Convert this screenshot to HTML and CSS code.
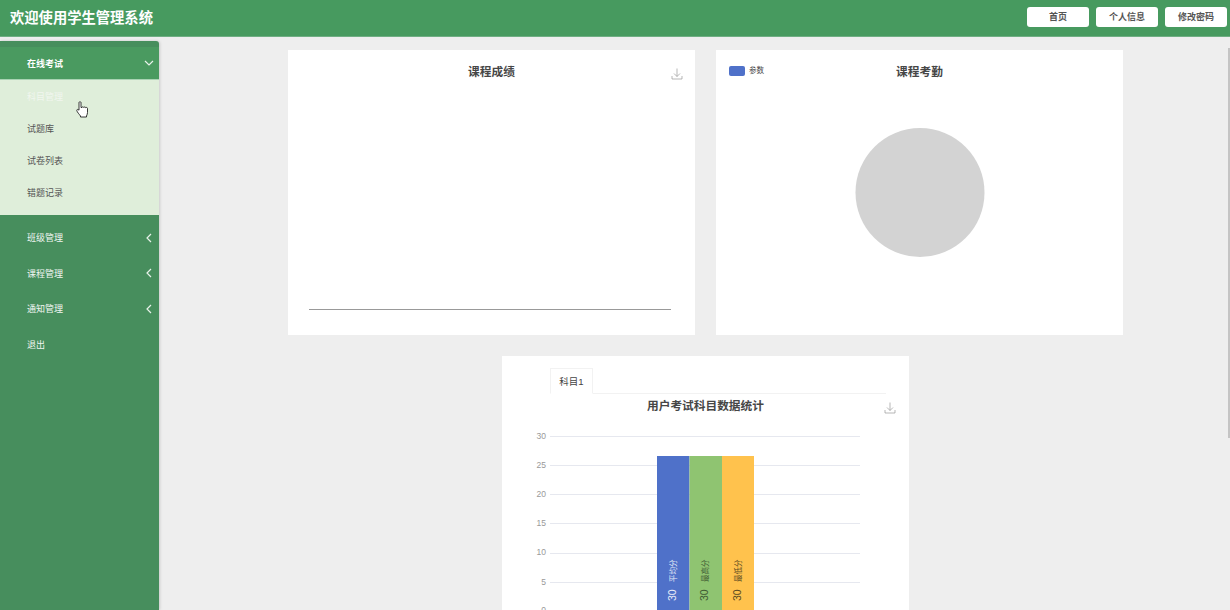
FILE: index.html
```html
<!DOCTYPE html>
<html>
<head>
  <title>学生管理系统</title>
  <link rel="stylesheet" href="styles.css">
</head>
<body>
  <div class="header">
    <div class="logo-title">欢迎使用学生管理系统</div>
    <div class="header-btns">
      <a class="header-btn">首页</a>
      <a class="header-btn">个人信息</a>
      <a class="header-btn">修改密码</a>
    </div>
  </div>

  <div class="page">
    <div class="sidebar">
      <div class="menu-item open">
        <span>在线考试</span>
        <svg class="arrow" width="10" height="10" viewBox="0 0 10 10"><path d="M1 3l4 4 4-4"/></svg>
      </div>
      <div class="submenu">
        <div class="sub-item active">科目管理</div>
        <div class="sub-item">试题库</div>
        <div class="sub-item">试卷列表</div>
        <div class="sub-item">错题记录</div>
      </div>
      <div class="menu-item">
        <span>班级管理</span>
        <svg class="arrow" width="10" height="10" viewBox="0 0 10 10"><path d="M7 1L3 5l4 4"/></svg>
      </div>
      <div class="menu-item">
        <span>课程管理</span>
        <svg class="arrow" width="10" height="10" viewBox="0 0 10 10"><path d="M7 1L3 5l4 4"/></svg>
      </div>
      <div class="menu-item">
        <span>通知管理</span>
        <svg class="arrow" width="10" height="10" viewBox="0 0 10 10"><path d="M7 1L3 5l4 4"/></svg>
      </div>
      <div class="menu-item">
        <span>退出</span>
      </div>
    </div>

    <div class="main">
      <div class="card">
        <div class="card-title">课程成绩</div>
        <svg class="save-icon" width="12" height="12" viewBox="0 0 12 12"><path d="M6 .5v8M3 5.500L6 8.500l3-3M1 8v3h10V8"/></svg>
        <svg class="chart" width="407" height="243" viewBox="0 0 407 243">
          <line x1="21" y1="217.500" x2="383" y2="217.500" stroke="#999999"/>
        </svg>
      </div>

      <div class="card">
        <div class="legend"><i class="legend-mark"></i><span class="legend-text">参数</span></div>
        <div class="card-title">课程考勤</div>
        <svg class="chart" width="407" height="243" viewBox="0 0 407 243">
          <circle cx="204" cy="100.500" r="64.500" fill="#d3d3d3"/>
        </svg>
      </div>

      <div class="card card-tall">
        <div class="tabs"><div class="tab">科目1</div></div>
        <div class="card-title title-small">用户考试科目数据统计</div>
        <svg class="save-icon save-low" width="12" height="12" viewBox="0 0 12 12"><path d="M6 .5v8M3 5.500L6 8.500l3-3M1 8v3h10V8"/></svg>
        <svg class="chart" width="407" height="200" viewBox="0 0 407 200">
          <g stroke="#e6e8ef">
            <line x1="48" y1="20.500" x2="358" y2="20.500"/>
            <line x1="48" y1="49.500" x2="358" y2="49.500"/>
            <line x1="48" y1="78.500" x2="358" y2="78.500"/>
            <line x1="48" y1="107.500" x2="358" y2="107.500"/>
            <line x1="48" y1="137.500" x2="358" y2="137.500"/>
            <line x1="48" y1="166.500" x2="358" y2="166.500"/>
            <line x1="48" y1="195.500" x2="358" y2="195.500"/>
          </g>
          <g class="axis-label" text-anchor="end">
            <text x="44" y="22.500">30</text>
            <text x="44" y="51.500">25</text>
            <text x="44" y="80.500">20</text>
            <text x="44" y="109.500">15</text>
            <text x="44" y="138.500">10</text>
            <text x="44" y="168.500">5</text>
            <text x="44" y="197">0</text>
          </g>
          <rect x="155" y="40" width="32.500" height="160" fill="#4f71c9"/>
          <rect x="187.500" y="40" width="32.500" height="160" fill="#8fc471"/>
          <rect x="220" y="40" width="32" height="160" fill="#ffc24d"/>
          <g class="bar-label" fill="#e8edf8" transform="translate(174 185) rotate(-90)"><text class="bar-num">30</text><text class="bar-name" x="19">平均分</text></g>
          <g class="bar-label" fill="#3f5a33" transform="translate(206 185) rotate(-90)"><text class="bar-num">30</text><text class="bar-name" x="19">最高分</text></g>
          <g class="bar-label" fill="#5a4a22" transform="translate(239 185) rotate(-90)"><text class="bar-num">30</text><text class="bar-name" x="19">最低分</text></g>
        </svg>
      </div>
    </div>
  </div>

  <div class="scroll-thumb"></div>

  <svg class="cursor" width="13" height="17" viewBox="0 0 13 17">
    <path d="M3 1.500c0-1 2-1 2 0v5l1 0c0-1 1.500-1 1.800 0 .2-.8 1.700-.8 1.900.2.400-.5 1.800-.3 1.800.8v4c0 1.500-.5 2-1 3.500v1H4.500v-1C3.500 13.500 1 11 .8 9.500c-.2-1 1-1.500 2.200-.3z" fill="#fff" stroke="#222" stroke-width=".9"/>
  </svg>
</body>
</html>
```

FILE: styles.css
```css
html, body {
  height: 100%;
}

body {
  margin: 0;
  background-color: #eeeeee;
  font-family: "Liberation Sans", "Noto Sans CJK SC", sans-serif;
  overflow: hidden;
  position: relative;
}

.header {
  height: 36px;
  background-color: #479a5f;
  border-bottom: 1px solid #6fae83;
  display: flex;
  justify-content: space-between;
  align-items: center;
  padding: 0 3px 0 10px;
}

.logo-title {
  color: #ffffff;
  font-size: 14.3px;
  font-weight: bold;
  margin-top: -3px;
}

.header-btns {
  display: flex;
  gap: 7px;
  margin-top: -2px;
}

.header-btn {
  width: 62px;
  height: 20px;
  line-height: 20px;
  background-color: #ffffff;
  border-radius: 3px;
  text-align: center;
  font-size: 9px;
  font-weight: bold;
  color: #555555;
}

.page {
  display: flex;
}

.sidebar {
  width: 159px;
  height: 569px;
  margin-top: 4px;
  padding-top: 6px;
  box-sizing: border-box;
  flex-shrink: 0;
  background-color: #478e5d;
  border-radius: 0 3px 0 0;
  box-shadow: 1px 0 3px rgba(0, 0, 0, 0.15);
}

.menu-item {
  height: 35.500px;
  display: flex;
  justify-content: space-between;
  align-items: center;
  padding: 0 5px 0 27px;
  font-size: 9px;
  color: #f0f6f2;
}

.menu-item.open {
  height: 32px;
  background-color: #4a9a60;
  font-weight: bold;
  color: #ffffff;
}

.arrow {
  fill: none;
  stroke: #e8f2ea;
  stroke-width: 1.200;
}

.submenu {
  height: 136px;
  padding-top: 2px;
  box-sizing: border-box;
  background-color: #dfeeda;
  border-top: 1px solid #a9d3b3;
  margin-bottom: 5px;
}

.sub-item {
  height: 32px;
  line-height: 31px;
  padding-left: 27px;
  font-size: 9px;
  color: #555555;
}

.sub-item.active {
  color: #f1f6ef;
}

.main {
  flex: 1;
  display: flex;
  flex-wrap: wrap;
  justify-content: center;
  align-content: flex-start;
  gap: 21px;
  padding: 13px 0 0 22px;
}

.card {
  width: 407px;
  height: 285px;
  background-color: #ffffff;
  position: relative;
}

.card-tall {
  height: 400px;
}

.card-title {
  height: 42px;
  line-height: 43px;
  text-align: center;
  font-size: 11.700px;
  font-weight: bold;
  color: #464646;
}

.title-small {
  height: 21.500px;
  line-height: 24px;
}

.chart {
  display: block;
}

.save-icon {
  position: absolute;
  top: 18px;
  right: 12px;
  fill: none;
  stroke: #999999;
  stroke-width: 0.700;
}

.save-low {
  top: 46px;
  right: 13px;
}

.legend {
  position: absolute;
  top: 16px;
  left: 13px;
  display: flex;
  align-items: center;
  gap: 4px;
  font-size: 7.500px;
  color: #444444;
}

.legend-mark {
  width: 16px;
  height: 10px;
  border-radius: 2px;
  background-color: #4f71c9;
}

.legend-text {
  margin-top: -3px;
}

.tabs {
  margin: 12px 23px 0 48px;
  height: 26px;
  box-sizing: border-box;
  border-bottom: 1px solid #f2f2f2;
}

.tab {
  width: 43px;
  height: 26px;
  box-sizing: border-box;
  border: 1px solid #f2f2f2;
  border-bottom-color: #ffffff;
  line-height: 25px;
  text-align: center;
  font-size: 9.500px;
  color: #444444;
}

.axis-label {
  font-size: 8.500px;
  fill: #999999;
}

.bar-num {
  font-size: 10.500px;
}

.bar-name {
  font-size: 7.500px;
}

.scroll-thumb {
  position: absolute;
  top: 48px;
  right: 0;
  width: 2px;
  height: 390px;
  background-color: #c4c4c4;
}

.cursor {
  position: absolute;
  left: 76px;
  top: 101px;
}
```
